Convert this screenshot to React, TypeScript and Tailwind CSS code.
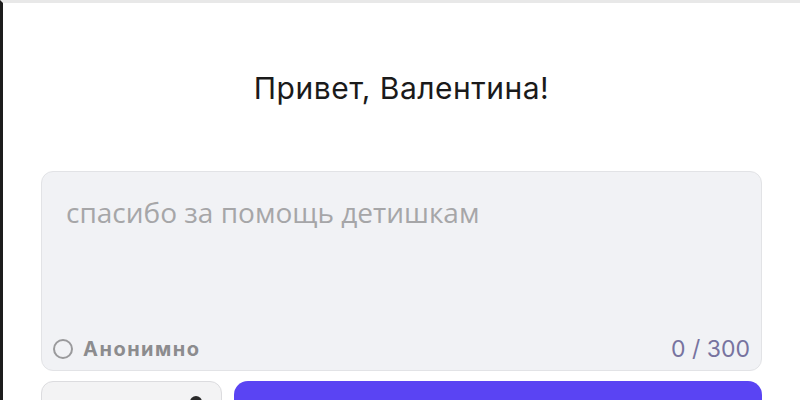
import React from "react";

export default function App() {
  return (
    <div className="w-[800px] h-[400px] overflow-hidden bg-white border-l-[3px] border-l-[#1c1c1c] border-t-[3px] border-t-[#e8e8e8] flex flex-col items-stretch px-[38px]" style={{ fontFamily: "Inter, 'Noto Sans', sans-serif" }}>
      <div className="shrink-0 pt-[67px] h-[165px] text-center text-[30px] leading-[36px] text-[#1a1a1a] tracking-[0.5px]">
        Привет, Валентина!
      </div>
      <div className="shrink-0 h-[200px] mt-[3px] rounded-[12px] bg-[#f1f2f5] border border-[#e2e3e6] flex flex-col justify-between pl-[24px] pr-[11px] pt-[23px] pb-[7px] relative">
        <div className="text-[28px] leading-[34px] text-[#a6a6a8]" style={{ fontFamily: "'Open Sans', Inter, sans-serif" }}>
          спасибо за помощь детишкам
        </div>
        <div className="flex items-center justify-between -ml-[13px]">
          <div className="flex items-center gap-[10px]">
            <span className="w-[20px] h-[20px] rounded-full border-[2px] border-[#9a9a9c] bg-transparent" />
            <span className="text-[20px] leading-[26px] font-bold tracking-[1.5px] text-[#8c8c8e]">Анонимно</span>
          </div>
          <span className="text-[23px] leading-[28px] text-[#77739f]">0 / 300</span>
        </div>
      </div>
      <div className="shrink-0 flex gap-[12px] mt-[10px]">
        <div className="w-[181px] h-[60px] rounded-[12px] bg-[#f3f3f4] border border-[#dcdcdf] relative">
          <span className="absolute left-[148px] top-[14px] w-[12px] h-[12px] rounded-full bg-[#2a2a2a]" />
        </div>
        <div className="flex-1 h-[60px] rounded-[14px] bg-[#5a44f3]" />
      </div>
    </div>
  );
}
